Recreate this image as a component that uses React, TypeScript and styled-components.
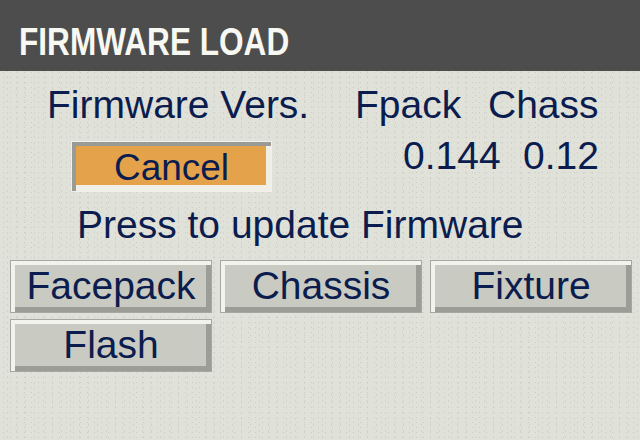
import React from 'react';
import styled, { createGlobalStyle, css } from 'styled-components';

const GlobalStyle = createGlobalStyle`
    html, body {
        margin: 0;
        padding: 0;
    }
    body {
        width: 640px;
        height: 440px;
        overflow: hidden;
        background-color: #e0e1d9;
        background-image:
            radial-gradient(circle, #cbccc3 0.7px, transparent 1px),
            radial-gradient(circle, #d2d3ca 0.7px, transparent 1px);
        background-size: 7px 5px, 9px 6px;
        background-position: 0 0, 3px 2px;
        font-family: 'Liberation Sans', Arial, sans-serif;
        color: #0b1c4e;
    }
`;

const Screen = styled.div`
    display: flex;
    flex-direction: column;
    width: 640px;
    height: 440px;
`;

const TitleBar = styled.header`
    box-sizing: border-box;
    height: 71px;
    padding: 20px 0 0 19px;
    background: #4d4d4d;
`;

// the panel font is a condensed bold face, so squeeze the regular one
const Title = styled.h1`
    margin: 0;
    font-family: 'Liberation Sans', Arial, sans-serif;
    font-weight: bold;
    font-size: 39px;
    line-height: 44px;
    color: #f8f8f3;
    white-space: nowrap;
    transform: scaleX(0.81);
    transform-origin: left center;
`;

const InfoGrid = styled.div`
    display: grid;
    grid-template-columns: 308px 133px 1fr;
    padding-left: 47px;
    margin-top: 12px;
    row-gap: 7px;
    align-items: start;
`;

const Label = styled.span<{ $offset?: number }>`
    font-size: 39px;
    line-height: 44px;
    margin-left: ${(p) => p.$offset ?? 0}px;
`;

const bevel = css`
    box-sizing: border-box;
    display: flex;
    align-items: center;
    justify-content: center;
    padding: 0;
    font-family: 'Liberation Sans', Arial, sans-serif;
    font-size: 39px;
    color: #0b1c4e;
    cursor: pointer;
`;

const CancelButton = styled.button`
    ${bevel};
    width: 201px;
    height: 51px;
    margin: 7px 0 0 24px;
    font-size: 37px;
    padding-top: 3px;
    background: #e4a24b;
    border: 1px solid #f1f0ea;
    box-shadow: inset 4px 4px 0 #9a9b95, inset -5px -6px 0 #efeee7;
`;

const Prompt = styled.div`
    font-size: 39px;
    line-height: 44px;
    padding-left: 77px;
    margin-top: 11px;
`;

const ButtonGrid = styled.div`
    display: grid;
    grid-template-columns: repeat(3, 202px);
    grid-auto-rows: 53px;
    column-gap: 8px;
    row-gap: 6px;
    padding-left: 10px;
    margin-top: 13px;
`;

const LoadButton = styled.button`
    ${bevel};
    width: 202px;
    height: 53px;
    padding-bottom: 1px;
    background: #c9cac1;
    border: 1px solid #a6a7a0;
    box-shadow: inset 4px 4px 0 #f3f3ee, inset -5px -5px 0 #9c9d96;
`;

const targets = ['Facepack', 'Chassis', 'Fixture', 'Flash'];

const App: React.FC = () => {
    return (
        <>
            <GlobalStyle />
            <Screen>
                <TitleBar>
                    <Title>FIRMWARE LOAD</Title>
                </TitleBar>
                <InfoGrid>
                    <Label>Firmware Vers.</Label>
                    <Label>Fpack</Label>
                    <Label>Chass</Label>
                    <CancelButton>Cancel</CancelButton>
                    <Label $offset={48}>0.144</Label>
                    <Label $offset={35}>0.12</Label>
                </InfoGrid>
                <Prompt>Press to update Firmware</Prompt>
                <ButtonGrid>
                    {targets.map((t) => (
                        <LoadButton key={t}>{t}</LoadButton>
                    ))}
                </ButtonGrid>
            </Screen>
        </>
    );
};

export default App;
